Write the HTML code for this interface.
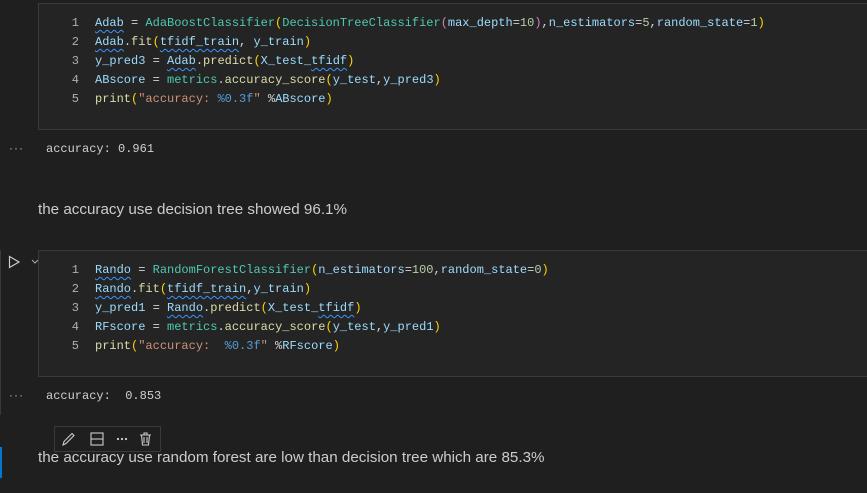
<!DOCTYPE html><html><head><style>
body{margin:0;width:867px;height:493px;background:#1f1f1f;overflow:hidden;position:relative;font-family:"Liberation Sans",sans-serif}
.cell{position:absolute;left:38px;width:840px;height:127px;background:#242424;border:1px solid #3a3a3a;box-sizing:border-box}
.code{position:absolute;left:0;top:10px;font:12px/19px "Liberation Mono",monospace;color:#d4d4d4;white-space:pre}
.ln{display:inline-block;width:40px;text-align:right;color:#b0b0b0;margin-right:16px}
.v{color:#9cdcfe}.c{color:#4ec9b0}.f{color:#dcdcaa}.p{color:#ffd700}.s{color:#ce9178}.k{color:#569cd6}.n{color:#b5cea8}.m{color:#c586c0}
.sq{text-decoration:underline wavy #3794ff;text-decoration-thickness:1px;text-underline-offset:3px}
.out{position:absolute;left:46px;font:12px "Liberation Mono",monospace;color:#d0d0d0;white-space:pre}
.dots{position:absolute;left:9px;color:#aaa;font-size:12px;letter-spacing:1px}
.md{position:absolute;left:38px;font-size:15.2px;color:#cccccc}
</style></head><body>
<div class="cell" style="top:3px"><div class="code"><span class="ln">1</span><span class="v sq">Adab</span> = <span class="c">AdaBoostClassifier</span><span class="p">(</span><span class="c">DecisionTreeClassifier</span><span class="m">(</span><span class="v">max_depth</span>=<span class="n">10</span><span class="m">)</span>,<span class="v">n_estimators</span>=<span class="n">5</span>,<span class="v">random_state</span>=<span class="n">1</span><span class="p">)</span>
<span class="ln">2</span><span class="v sq">Adab</span>.<span class="f">fit</span><span class="p">(</span><span class="v sq">tfidf_train</span>, <span class="v">y_train</span><span class="p">)</span>
<span class="ln">3</span><span class="v">y_pred3</span> = <span class="v sq">Adab</span>.<span class="f">predict</span><span class="p">(</span><span class="v">X_test_</span><span class="v sq">tfidf</span><span class="p">)</span>
<span class="ln">4</span><span class="v">ABscore</span> = <span class="c">metrics</span>.<span class="f">accuracy_score</span><span class="p">(</span><span class="v">y_test</span>,<span class="v">y_pred3</span><span class="p">)</span>
<span class="ln">5</span><span class="f">print</span><span class="p">(</span><span class="s">"accuracy: </span><span class="k">%0.3f</span><span class="s">"</span> %<span class="v">ABscore</span><span class="p">)</span></div></div>
<div class="dots" style="top:141px">···</div>
<div class="out" style="top:142px">accuracy: 0.961</div>
<div class="md" style="top:201px">the accuracy use decision tree showed 96.1%</div>
<div style="position:absolute;left:0;top:250px;width:1px;height:165px;background:#3a3a3a"></div>
<svg style="position:absolute;left:8px;top:255px" width="30" height="14"><path d="M1.5 1.5 L11 7 L1.5 12.5Z" fill="none" stroke="#ccc" stroke-width="1.2"/><path d="M24 5 l3 3 l3 -3" fill="none" stroke="#aaa" stroke-width="1"/></svg>
<div class="cell" style="top:250px"><div class="code"><span class="ln">1</span><span class="v sq">Rando</span> = <span class="c">RandomForestClassifier</span><span class="p">(</span><span class="v">n_estimators</span>=<span class="n">100</span>,<span class="v">random_state</span>=<span class="n">0</span><span class="p">)</span>
<span class="ln">2</span><span class="v sq">Rando</span>.<span class="f">fit</span><span class="p">(</span><span class="v sq">tfidf_train</span>,<span class="v">y_train</span><span class="p">)</span>
<span class="ln">3</span><span class="v">y_pred1</span> = <span class="v sq">Rando</span>.<span class="f">predict</span><span class="p">(</span><span class="v">X_test_</span><span class="v sq">tfidf</span><span class="p">)</span>
<span class="ln">4</span><span class="v">RFscore</span> = <span class="c">metrics</span>.<span class="f">accuracy_score</span><span class="p">(</span><span class="v">y_test</span>,<span class="v">y_pred1</span><span class="p">)</span>
<span class="ln">5</span><span class="f">print</span><span class="p">(</span><span class="s">"accuracy:  </span><span class="k">%0.3f</span><span class="s">"</span> %<span class="v">RFscore</span><span class="p">)</span></div></div>
<div class="dots" style="top:388px">···</div>
<div class="out" style="top:389px">accuracy:  0.853</div>
<div style="position:absolute;left:54px;top:426px;width:107px;height:26px;border:1px solid #3a3a3a;box-sizing:border-box;background:#1f1f1f"></div>
<svg style="position:absolute;left:60px;top:431px" width="100" height="16" fill="none" stroke="#ccc" stroke-width="1.1"><path d="M3 14 L4 10.5 L12 2.5 L14 4.5 L6 12.5 Z"/><rect x="31" y="2" width="12" height="12"/><path d="M31 8 H43"/><circle cx="58" cy="8" r=".6" fill="#ccc"/><circle cx="62" cy="8" r=".6" fill="#ccc"/><circle cx="66" cy="8" r=".6" fill="#ccc"/><path d="M80 4 H91 M84 4 V2 H87 V4 M81.5 4 L82.5 14 H88.5 L89.5 4 M84 6 V12 M87 6 V12"/></svg>
<div style="position:absolute;left:0;top:447px;width:2px;height:31px;background:#0078d4"></div>
<div class="md" style="top:449px">the accuracy use random forest are low than decision tree which are 85.3%</div>
</body></html>
